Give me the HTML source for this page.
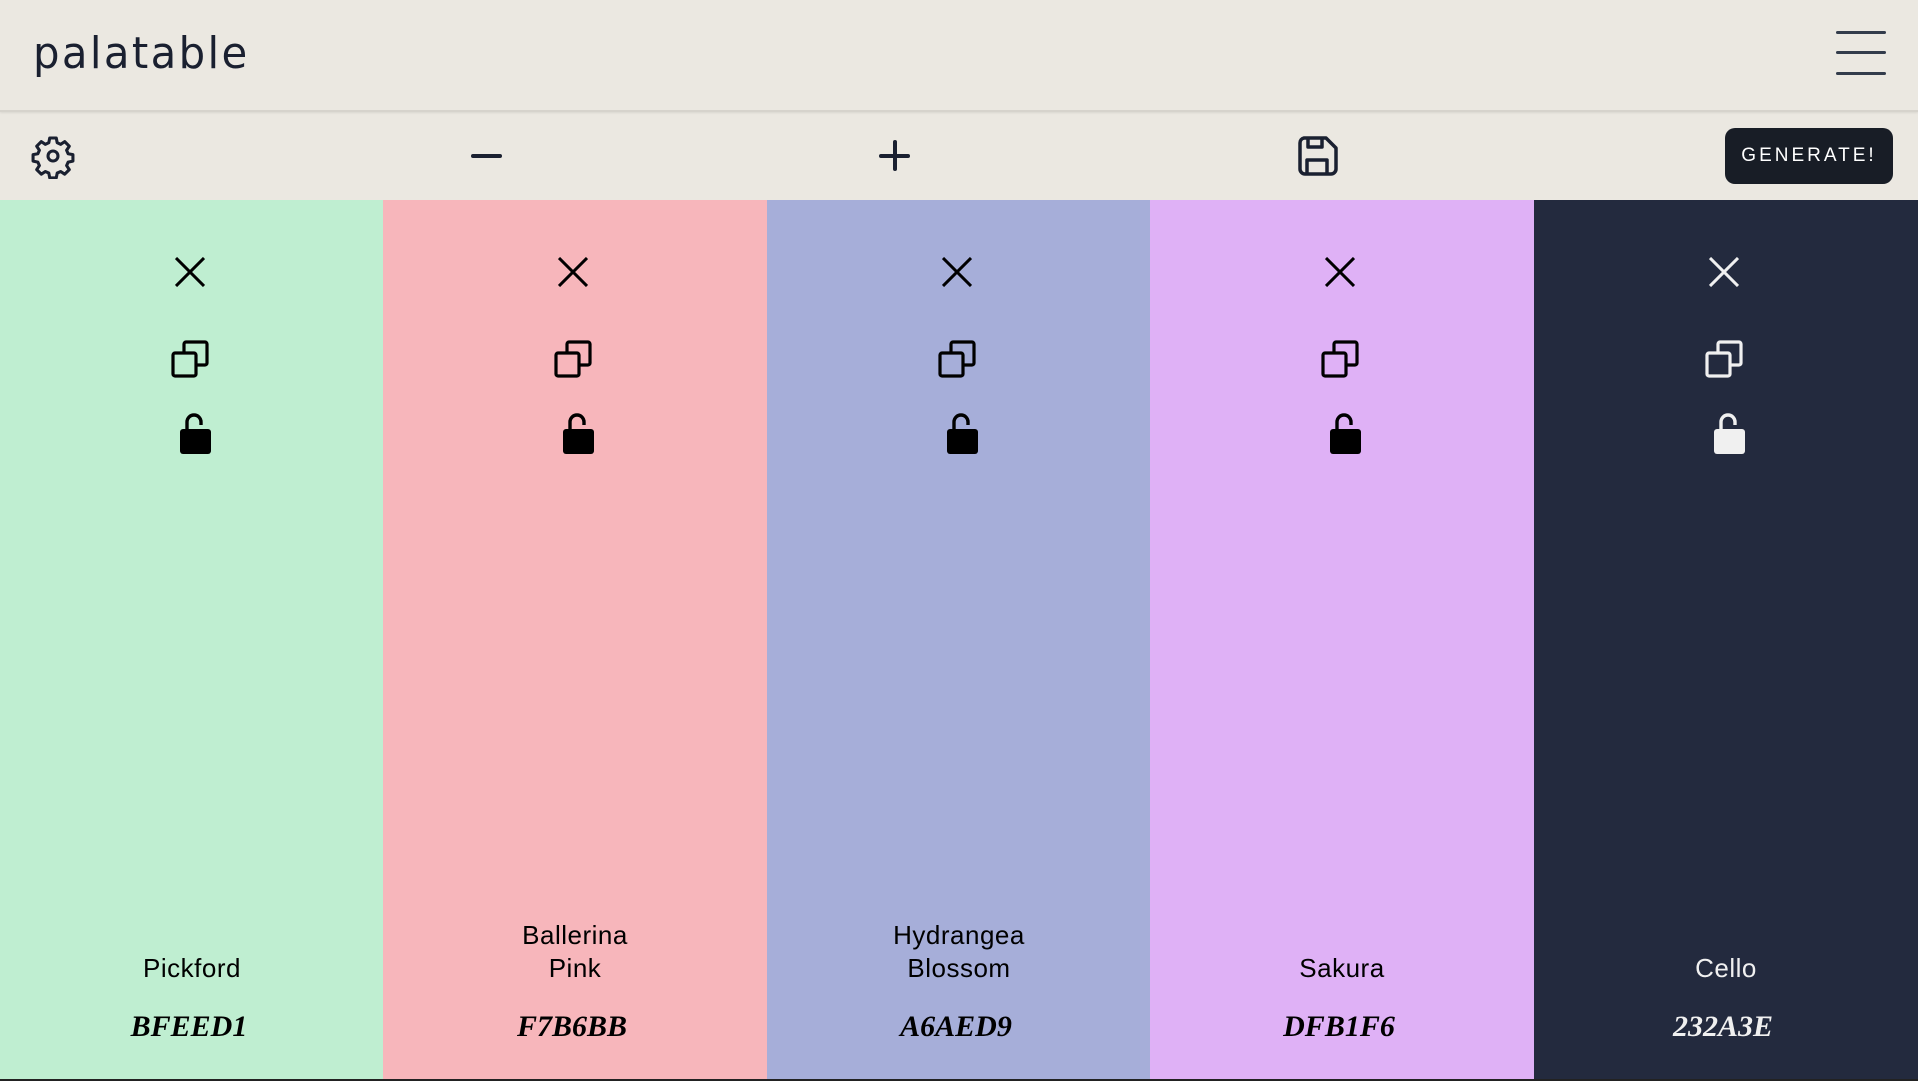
<!DOCTYPE html>
<html><head><style>
*{margin:0;padding:0;box-sizing:border-box}
body{width:1918px;height:1081px;overflow:hidden;background:#ebe8e1;font-family:"Liberation Sans",sans-serif;position:relative}
.hdr{position:absolute;left:0;top:0;width:1918px;height:112px;border-bottom:2px solid #d6d3cc;box-shadow:0 1px 2px rgba(0,0,0,.08)}
.logo{position:absolute;left:33px;top:28px;font-size:44px;color:#1a2030;letter-spacing:2.5px;font-family:"DejaVu Sans","Liberation Sans",sans-serif;font-weight:normal;transform:scaleX(.95);transform-origin:left}
.ham{position:absolute;left:1836px;width:50px;height:3px;background:#333c4b;border-radius:2px}
.btn{position:absolute;left:1725px;top:128px;width:168px;height:56px;background:#181d26;border-radius:10px;color:#fff;font-size:19px;letter-spacing:3px;text-align:center;line-height:56px;font-weight:normal}
.col{position:absolute;top:200px;width:384px;height:880px}
.col svg{position:absolute}
.name{position:absolute;left:0;width:100%;text-align:center;font-size:26px;line-height:33px;letter-spacing:.5px}
.hex{position:absolute;left:-3px;width:100%;top:810px;text-align:center;font-family:"Liberation Serif",serif;font-weight:bold;font-style:italic;font-size:30px}
.bot{position:absolute;left:0;top:1079px;width:1918px;height:2px;background:#222}
</style></head><body>
<div class="hdr"><div class="logo">palatable</div>
<div class="ham" style="top:31px"></div><div class="ham" style="top:51px"></div><div class="ham" style="top:72px"></div></div>
<svg style="position:absolute;left:30px;top:133px" width="46" height="46" viewBox="0 0 24 24" fill="none" stroke="#1a2030" stroke-width="1.6" stroke-linejoin="round"><path d="M10.3 2.6h3.4l.5 2.5 1.8.8 2.1-1.4 2.4 2.4-1.4 2.1.8 1.8 2.5.5v3.4l-2.5.5-.8 1.8 1.4 2.1-2.4 2.4-2.1-1.4-1.8.8-.5 2.5h-3.4l-.5-2.5-1.8-.8-2.1 1.4-2.4-2.4 1.4-2.1-.8-1.8-2.5-.5v-3.4l2.5-.5.8-1.8-1.4-2.1 2.4-2.4 2.1 1.4 1.8-.8z"/><circle cx="12" cy="12" r="2.6"/></svg>
<div style="position:absolute;left:471px;top:154px;width:31px;height:4px;background:#1a2030;border-radius:2px"></div>
<div style="position:absolute;left:879px;top:154px;width:31px;height:4px;background:#1a2030;border-radius:2px"></div>
<div style="position:absolute;left:893px;top:140px;width:4px;height:31px;background:#1a2030;border-radius:2px"></div>
<svg style="position:absolute;left:1298px;top:136px" width="40" height="40" viewBox="0 0 40 40" fill="none" stroke="#1a2030" stroke-width="3.5" stroke-linejoin="round"><path d="M6 2h22l10 10v21a5 5 0 0 1-5 5H7a5 5 0 0 1-5-5V7a5 5 0 0 1 4-5z"/><path d="M10 2v9h14V2M9 38V24h20v14"/></svg>
<div class="btn">GENERATE!</div>
<div class="col" style="left:0;background:#bfeed1"></div>
<div class="col" style="left:383px;background:#f7b6bb"></div>
<div class="col" style="left:767px;background:#a6aed9"></div>
<div class="col" style="left:1150px;background:#dfb1f6"></div>
<div class="col" style="left:1534px;background:#232a3e;width:384px"></div>
<script>
var cols=[["Pickford","BFEED1","#000"],["Ballerina<br>Pink","F7B6BB","#000"],["Hydrangea<br>Blossom","A6AED9","#000"],["Sakura","DFB1F6","#000"],["Cello","232A3E","#f0f0f0"]];
var els=document.querySelectorAll('.col');
cols.forEach(function(c,i){var e=els[i];var two=c[0].indexOf('<br>')>0;var col=c[2];
e.innerHTML='<svg style="left:175px;top:57px" width="30" height="30" viewBox="0 0 30 30" stroke="'+col+'" stroke-width="3"><path d="M1 1L29 29M29 1L1 29"/></svg>'+
'<svg style="left:171px;top:140px" width="38" height="38" viewBox="0 0 38 38" fill="none" stroke="'+col+'" stroke-width="3.2" stroke-linejoin="round"><rect x="2" y="13" width="23" height="23" rx="2"/><path d="M13 13V4a2 2 0 0 1 2-2h19a2 2 0 0 1 2 2v19a2 2 0 0 1-2 2h-9"/></svg>'+
'<svg style="left:180px;top:213px" width="31" height="41" viewBox="0 0 31 41"><path d="M7 17V9a7 7 0 0 1 14 0v3" fill="none" stroke="'+col+'" stroke-width="3.4"/><rect x="0" y="16" width="31" height="25" rx="3" fill="'+col+'"/></svg>'+
'<div class="name" style="color:'+col+';top:'+(two?719:752)+'px">'+c[0]+'</div><div class="hex" style="color:'+col+'">'+c[1]+'</div>';});
</script>
<div class="bot"></div>
</body></html>
